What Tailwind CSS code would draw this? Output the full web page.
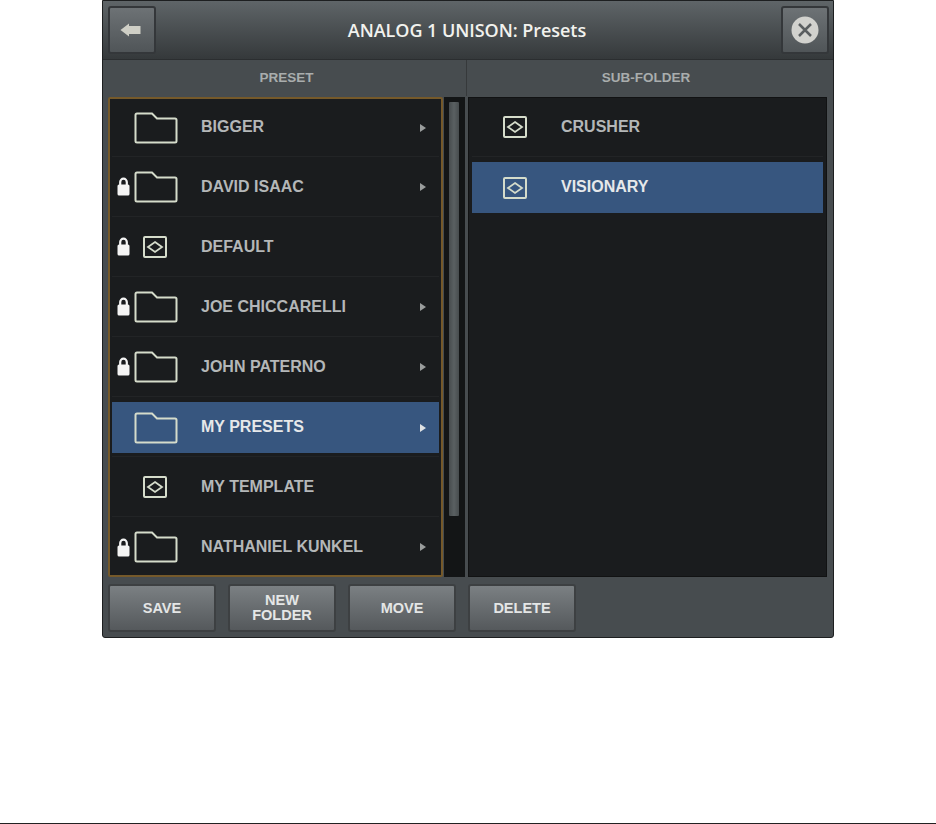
<!DOCTYPE html>
<html lang="en">
  <head>
    <meta charset="UTF-8" />
    <title>ANALOG 1 UNISON: Presets</title>
    <script src="https://cdn.jsdelivr.net/npm/@tailwindcss/browser@4"></script>
  </head>
  <body class="h-[824px] bg-white flex flex-col justify-between overflow-hidden font-['Liberation_Sans',Arial,sans-serif]">
    <!-- Window -->
    <div class="ml-[102px] w-[732px] h-[638px] flex flex-col bg-[#474c4f] border border-[#1d1f20] rounded-b-[3px]">
      <!-- Title bar -->
      <div class="h-[59px] shrink-0 flex items-center justify-between pl-[5px] pr-[4px] pb-[1px] bg-gradient-to-b from-[#5f6568] to-[#35393b] border-b border-[#2b2e30]">
        <button class="w-[48px] h-[48px] flex items-center justify-center rounded-[3px] border-2 border-[#34373a] bg-gradient-to-b from-[#6d7275] to-[#505558]">
          <svg class="mr-[3px]" width="21" height="14" viewBox="0 0 21 14"><path d="M.5 7 9 .5V3H20.500V11H9V13.500Z" fill="#cfcfc6"/></svg>
        </button>
        <div class="text-[18px] leading-[24px] font-semibold text-[#f2f2ee] font-['Open_Sans',sans-serif] tracking-[-0.05px] pr-[3px]">ANALOG 1 UNISON: Presets</div>
        <button class="w-[48px] h-[48px] flex items-center justify-center rounded-[3px] border-2 border-[#34373a] bg-gradient-to-b from-[#6d7275] to-[#505558]">
          <svg width="28" height="28" viewBox="0 0 28 28"><circle cx="14" cy="14" r="13.500" fill="#d2d2ce"/><path d="M8 8 20 20M20 8 8 20" stroke="#5a5e60" stroke-width="2.500"/></svg>
        </button>
      </div>
      <!-- Column heads -->
      <div class="h-[37px] shrink-0 flex pb-[1px] text-[13.5px] font-bold text-[#a9adad]">
        <div class="w-[363px] flex items-center justify-center pl-[4px]">PRESET</div>
        <div class="w-px bg-[#36393b]"></div>
        <div class="flex-1 flex items-center justify-center pr-[8px]">SUB-FOLDER</div>
      </div>
      <!-- Panels -->
      <div class="h-[480px] shrink-0 flex pl-[5px] text-[16px] font-bold text-[#b4b7b8]">
        <div class="w-[335px] h-[480px] border-2 border-[#75592a] rounded-[2px] bg-[#1a1c1e] px-[2px] flex flex-col">
          <div class="h-[58px] shrink-0 flex items-center border-b border-[#222426]">
            <span class="w-[22px]"></span>
            <svg width="44" height="32" viewBox="0 0 44 32"><path d="M1.500 3Q1.500 1.500 3 1.500H18L23 6.500H41Q42.500 6.500 42.500 8V29Q42.500 30.500 41 30.500H3Q1.500 30.500 1.500 29Z" fill="none" stroke="#d5dccb" stroke-width="2"/></svg>
            <span class="ml-[23px] flex-1 pb-[2px]">BIGGER</span>
            <svg class="mr-[12px]" width="8" height="10" viewBox="0 0 8 10"><path d="M1 1 7 5 1 9Z" fill="#9a9d9d"/></svg>
          </div>
          <div class="h-[60px] shrink-0 flex items-center border-b border-[#222426]">
            <svg class="ml-[5px]" width="13" height="19" viewBox="0 0 13 19"><path d="M3.200 9V5A3.300 3.300 0 0 1 9.800 5V9" fill="none" stroke="#f4f4f4" stroke-width="2.200"/><rect x="0.500" y="7.500" width="12" height="11" rx="1.500" fill="#f4f4f4"/></svg>
            <svg class="ml-[4px]" width="44" height="32" viewBox="0 0 44 32"><path d="M1.500 3Q1.500 1.500 3 1.500H18L23 6.500H41Q42.500 6.500 42.500 8V29Q42.500 30.500 41 30.500H3Q1.500 30.500 1.500 29Z" fill="none" stroke="#d5dccb" stroke-width="2"/></svg>
            <span class="ml-[23px] flex-1">DAVID ISAAC</span>
            <svg class="mr-[12px]" width="8" height="10" viewBox="0 0 8 10"><path d="M1 1 7 5 1 9Z" fill="#9a9d9d"/></svg>
          </div>
          <div class="h-[60px] shrink-0 flex items-center border-b border-[#222426]">
            <svg class="ml-[5px]" width="13" height="19" viewBox="0 0 13 19"><path d="M3.200 9V5A3.300 3.300 0 0 1 9.800 5V9" fill="none" stroke="#f4f4f4" stroke-width="2.200"/><rect x="0.500" y="7.500" width="12" height="11" rx="1.500" fill="#f4f4f4"/></svg>
            <svg class="ml-[12px]" width="26" height="24" viewBox="0 0 26 24"><rect x="2" y="2" width="22" height="20" rx="1" fill="none" stroke="#d5dccb" stroke-width="2"/><path d="M13 7 20 12 13 17 6 12Z" fill="none" stroke="#d5dccb" stroke-width="1.800"/></svg>
            <span class="ml-[33px] flex-1">DEFAULT</span>
          </div>
          <div class="h-[60px] shrink-0 flex items-center border-b border-[#222426]">
            <svg class="ml-[5px]" width="13" height="19" viewBox="0 0 13 19"><path d="M3.200 9V5A3.300 3.300 0 0 1 9.800 5V9" fill="none" stroke="#f4f4f4" stroke-width="2.200"/><rect x="0.500" y="7.500" width="12" height="11" rx="1.500" fill="#f4f4f4"/></svg>
            <svg class="ml-[4px]" width="44" height="32" viewBox="0 0 44 32"><path d="M1.500 3Q1.500 1.500 3 1.500H18L23 6.500H41Q42.500 6.500 42.500 8V29Q42.500 30.500 41 30.500H3Q1.500 30.500 1.500 29Z" fill="none" stroke="#d5dccb" stroke-width="2"/></svg>
            <span class="ml-[23px] flex-1">JOE CHICCARELLI</span>
            <svg class="mr-[12px]" width="8" height="10" viewBox="0 0 8 10"><path d="M1 1 7 5 1 9Z" fill="#9a9d9d"/></svg>
          </div>
          <div class="h-[60px] shrink-0 flex items-center border-b border-[#222426]">
            <svg class="ml-[5px]" width="13" height="19" viewBox="0 0 13 19"><path d="M3.200 9V5A3.300 3.300 0 0 1 9.800 5V9" fill="none" stroke="#f4f4f4" stroke-width="2.200"/><rect x="0.500" y="7.500" width="12" height="11" rx="1.500" fill="#f4f4f4"/></svg>
            <svg class="ml-[4px]" width="44" height="32" viewBox="0 0 44 32"><path d="M1.500 3Q1.500 1.500 3 1.500H18L23 6.500H41Q42.500 6.500 42.500 8V29Q42.500 30.500 41 30.500H3Q1.500 30.500 1.500 29Z" fill="none" stroke="#d5dccb" stroke-width="2"/></svg>
            <span class="ml-[23px] flex-1">JOHN PATERNO</span>
            <svg class="mr-[12px]" width="8" height="10" viewBox="0 0 8 10"><path d="M1 1 7 5 1 9Z" fill="#9a9d9d"/></svg>
          </div>
          <!-- selected row -->
          <div class="h-[60px] shrink-0 flex items-center border-b border-[#222426]">
            <div class="w-full h-[51px] mt-[2px] flex items-center bg-[#37567f] text-[#e6e8ea]">
              <svg class="ml-[22px]" width="44" height="32" viewBox="0 0 44 32"><path d="M1.500 3Q1.500 1.500 3 1.500H18L23 6.500H41Q42.500 6.500 42.500 8V29Q42.500 30.500 41 30.500H3Q1.500 30.500 1.500 29Z" fill="none" stroke="#d5dccb" stroke-width="2"/></svg>
              <span class="ml-[23px] flex-1 pb-[2px]">MY PRESETS</span>
              <svg class="mr-[12px]" width="8" height="10" viewBox="0 0 8 10"><path d="M1 1 7 5 1 9Z" fill="#dfe2e4"/></svg>
            </div>
          </div>
          <div class="h-[60px] shrink-0 flex items-center border-b border-[#222426]">
            <svg class="ml-[30px]" width="26" height="24" viewBox="0 0 26 24"><rect x="2" y="2" width="22" height="20" rx="1" fill="none" stroke="#d5dccb" stroke-width="2"/><path d="M13 7 20 12 13 17 6 12Z" fill="none" stroke="#d5dccb" stroke-width="1.800"/></svg>
            <span class="ml-[33px] flex-1">MY TEMPLATE</span>
          </div>
          <div class="h-[60px] shrink-0 flex items-center">
            <svg class="ml-[5px]" width="13" height="19" viewBox="0 0 13 19"><path d="M3.200 9V5A3.300 3.300 0 0 1 9.800 5V9" fill="none" stroke="#f4f4f4" stroke-width="2.200"/><rect x="0.500" y="7.500" width="12" height="11" rx="1.500" fill="#f4f4f4"/></svg>
            <svg class="ml-[4px]" width="44" height="32" viewBox="0 0 44 32"><path d="M1.500 3Q1.500 1.500 3 1.500H18L23 6.500H41Q42.500 6.500 42.500 8V29Q42.500 30.500 41 30.500H3Q1.500 30.500 1.500 29Z" fill="none" stroke="#d5dccb" stroke-width="2"/></svg>
            <span class="ml-[23px] flex-1">NATHANIEL KUNKEL</span>
            <svg class="mr-[12px]" width="8" height="10" viewBox="0 0 8 10"><path d="M1 1 7 5 1 9Z" fill="#9a9d9d"/></svg>
          </div>
        </div>
        <!-- Scrollbar -->
        <div class="w-[21px] ml-[1px] bg-[#131516] pt-[5px] pl-[5px]">
          <div class="w-[10px] h-[414px] bg-gradient-to-r from-[#474c4e] via-[#5a6062] to-[#474c4e] rounded-[1px]"></div>
        </div>
        <div class="w-[3px] bg-[#474c4f]"></div>
        <!-- Right list -->
        <div class="w-[359px] h-[480px] bg-[#1a1c1e] border border-[#111213] px-[3px]">
          <div class="h-[59px] flex items-center border-b border-[#222426]">
            <svg class="ml-[30px]" width="26" height="24" viewBox="0 0 26 24"><rect x="2" y="2" width="22" height="20" rx="1" fill="none" stroke="#d5dccb" stroke-width="2"/><path d="M13 7 20 12 13 17 6 12Z" fill="none" stroke="#d5dccb" stroke-width="1.800"/></svg>
            <span class="ml-[33px]">CRUSHER</span>
          </div>
          <div class="h-[51px] mt-[5px] flex items-center bg-[#37567f] text-[#e6e8ea]">
            <svg class="ml-[30px]" width="26" height="24" viewBox="0 0 26 24"><rect x="2" y="2" width="22" height="20" rx="1" fill="none" stroke="#d5dccb" stroke-width="2"/><path d="M13 7 20 12 13 17 6 12Z" fill="none" stroke="#d5dccb" stroke-width="1.800"/></svg>
            <span class="ml-[33px] pb-[2px]">VISIONARY</span>
          </div>
        </div>
      </div>
      <!-- Footer buttons -->
      <div class="flex gap-[12px] pl-[5px] pt-[7px] text-[14.500px] leading-[15px] font-bold text-[#e4e6e6] text-center">
        <button class="w-[108px] h-[48px] flex items-center justify-center rounded-[3px] border-2 border-[#3d4042] bg-gradient-to-b from-[#7b8083] to-[#55595c]">SAVE</button>
        <button class="w-[108px] h-[48px] flex items-center justify-center rounded-[3px] border-2 border-[#3d4042] bg-gradient-to-b from-[#7b8083] to-[#55595c]">NEW<br />FOLDER</button>
        <button class="w-[108px] h-[48px] flex items-center justify-center rounded-[3px] border-2 border-[#3d4042] bg-gradient-to-b from-[#7b8083] to-[#55595c]">MOVE</button>
        <button class="w-[108px] h-[48px] flex items-center justify-center rounded-[3px] border-2 border-[#3d4042] bg-gradient-to-b from-[#7b8083] to-[#55595c]">DELETE</button>
      </div>
    </div>
    <!-- Page rule -->
    <div class="h-px bg-[#222222]"></div>
  </body>
</html>
